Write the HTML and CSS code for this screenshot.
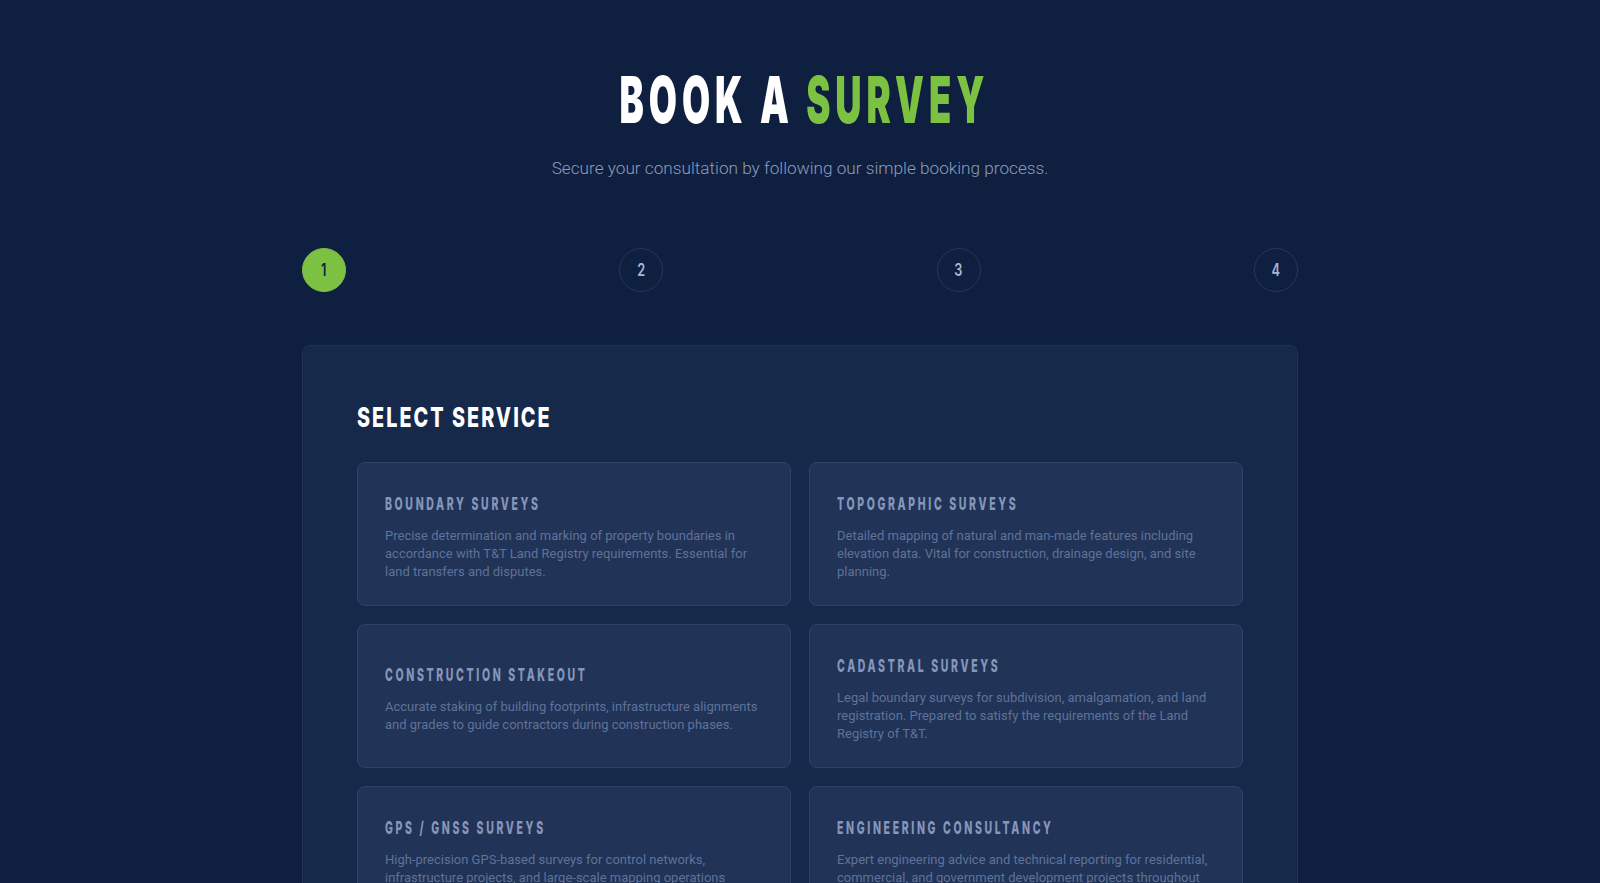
FILE: index.html
```html
<!DOCTYPE html>
<html lang="en">
<head>
<meta charset="utf-8">
<title>Book a Survey</title>
<link rel="stylesheet" href="styles.css">
</head>
<body>
<main class="page">
  <header class="hero">
    <h1 class="hero-title"><span class="hero-title-text">BOOK A <span class="accent">SURVEY</span></span></h1>
    <p class="hero-sub">Secure your consultation by following our simple booking process.</p>
  </header>

  <ol class="steps">
    <li class="step step-active"><span class="step-num">1</span></li>
    <li class="step"><span class="step-num">2</span></li>
    <li class="step"><span class="step-num">3</span></li>
    <li class="step"><span class="step-num">4</span></li>
  </ol>

  <section class="panel">
    <h2 class="panel-title"><span class="panel-title-text">SELECT SERVICE</span></h2>
    <div class="services">
      <div class="service">
        <h3 class="service-name"><span class="service-name-text">BOUNDARY SURVEYS</span></h3>
        <p class="service-desc">Precise determination and marking of property boundaries in accordance with T&amp;T Land Registry requirements. Essential for land transfers and disputes.</p>
      </div>
      <div class="service">
        <h3 class="service-name"><span class="service-name-text">TOPOGRAPHIC SURVEYS</span></h3>
        <p class="service-desc">Detailed mapping of natural and man-made features including elevation data. Vital for construction, drainage design, and site planning.</p>
      </div>
      <div class="service">
        <h3 class="service-name"><span class="service-name-text">CONSTRUCTION STAKEOUT</span></h3>
        <p class="service-desc">Accurate staking of building footprints, infrastructure alignments and grades to guide contractors during construction phases.</p>
      </div>
      <div class="service">
        <h3 class="service-name"><span class="service-name-text">CADASTRAL SURVEYS</span></h3>
        <p class="service-desc">Legal boundary surveys for subdivision, amalgamation, and land registration. Prepared to satisfy the requirements of the Land Registry of T&amp;T.</p>
      </div>
      <div class="service">
        <h3 class="service-name"><span class="service-name-text">GPS / GNSS SURVEYS</span></h3>
        <p class="service-desc">High-precision GPS-based surveys for control networks, infrastructure projects, and large-scale mapping operations across Trinidad and Tobago.</p>
      </div>
      <div class="service">
        <h3 class="service-name"><span class="service-name-text">ENGINEERING CONSULTANCY</span></h3>
        <p class="service-desc">Expert engineering advice and technical reporting for residential, commercial, and government development projects throughout Trinidad and Tobago.</p>
      </div>
    </div>
  </section>
</main>
</body>
</html>
```

FILE: styles.css
```css
html, body {
  margin: 0;
  padding: 0;
}

body {
  background: #0e1f3f;
  color: #ffffff;
  font-family: Roboto, "Liberation Sans", sans-serif;
}

.page {
  max-width: 996px;
  margin: 0 auto;
  padding-top: 67px;
}

/* Condensed display type */
.hero-title-text,
.panel-title-text,
.service-name-text,
.step-num {
  font-family: Inter, "Liberation Sans", sans-serif;
  display: inline-block;
  white-space: nowrap;
}

.hero {
  text-align: center;
}

.hero-title {
  margin: 0;
  font-size: 65px;
  line-height: 65px;
  font-weight: 900;
}

.hero-title-text {
  font-weight: 900;
  letter-spacing: 8.9px;
  margin-right: -8.9px;
  transform: scaleX(0.56);
  transform-origin: center center;
}

.accent {
  color: #7cc142;
}

.hero-sub {
  margin: 21px 0 0;
  font-size: 17.2px;
  line-height: 26px;
  font-weight: 300;
  color: #8e9cbd;
}

.steps {
  list-style: none;
  margin: 67px 0 0;
  padding: 0;
  display: flex;
  justify-content: space-between;
}

.step {
  width: 42px;
  height: 42px;
  border: 1px solid #263858;
  border-radius: 50%;
  display: flex;
  align-items: center;
  justify-content: center;
  color: #a7b6d6;
}

.step-active {
  background: #7cc142;
  border-color: #7cc142;
  color: #0e1f3f;
}

.step-num {
  font-size: 17px;
  font-weight: 600;
  line-height: 1;
  transform: scaleX(0.75);
  transform-origin: center center;
}

.panel {
  margin-top: 53px;
  background: #17294b;
  border: 1px solid #1f3255;
  border-radius: 8px;
  padding: 55px 54px 60px;
}

.panel-title {
  margin: 0 0 27px;
  font-size: 27.5px;
  line-height: 33.6px;
  color: #ffffff;
}

.panel-title-text {
  font-weight: 800;
  letter-spacing: 2.8px;
  transform: scaleX(0.72);
  transform-origin: left center;
}

.services {
  display: grid;
  grid-template-columns: 1fr 1fr;
  gap: 18px;
}

.service {
  background: #213357;
  border: 1px solid #2f4268;
  border-radius: 8px;
  padding: 28px 27px 24px;
  display: flex;
  flex-direction: column;
  justify-content: center;
}

.service-name {
  margin: 0 0 10px;
  font-size: 17.5px;
  line-height: 26px;
  color: #8696ba;
}

.service-name-text {
  font-weight: 800;
  letter-spacing: 4.4px;
  transform: scaleX(0.6);
  transform-origin: left center;
}

.service-desc {
  margin: 0;
  font-size: 13px;
  line-height: 18px;
  color: #5f7297;
}
```
